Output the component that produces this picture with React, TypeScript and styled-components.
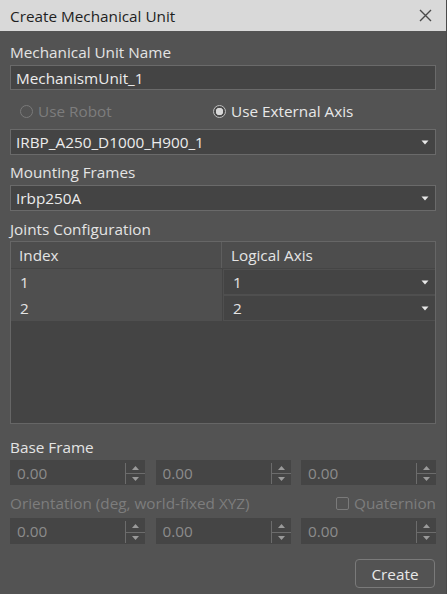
import styled, { createGlobalStyle } from "styled-components";

const GlobalStyle = createGlobalStyle`
  html, body {
    margin: 0;
    padding: 0;
    background: #535353;
  }
  * {
    box-sizing: border-box;
  }
`;

const AXIS_OPTIONS = [
  { index: 1, axis: "1" },
  { index: 2, axis: "2" },
];

export default function App() {
  return (
    <>
      <GlobalStyle />
      <Dialog>
        <TitleBar>
          <Title>Create Mechanical Unit</Title>
          <CloseIcon />
        </TitleBar>
        <Body>
          <Label>Mechanical Unit Name</Label>
          <TextField>MechanismUnit_1</TextField>

          <RadioRow>
            <RadioItem $disabled>
              <Radio $disabled />
              Use Robot
            </RadioItem>
            <RadioItem>
              <Radio $checked />
              Use External Axis
            </RadioItem>
          </RadioRow>

          <Combo $top={8}>
            IRBP_A250_D1000_H900_1
            <ArrowDown />
          </Combo>

          <Label $top={7}>Mounting Frames</Label>
          <Combo>
            Irbp250A
            <ArrowDown />
          </Combo>

          <Label $top={8}>Joints Configuration</Label>
          <Table>
            <HeaderRow>
              <HeaderCell>Index</HeaderCell>
              <HeaderCell $last>Logical Axis</HeaderCell>
            </HeaderRow>
            {AXIS_OPTIONS.map((row) => (
              <TableRow key={row.index}>
                <IndexCell>{row.index}</IndexCell>
                <CellCombo>
                  {row.axis}
                  <ArrowDown />
                </CellCombo>
              </TableRow>
            ))}
          </Table>

          <Label $top={13}>Base Frame</Label>
          <SpinRow>
            {[0, 1, 2].map((i) => (
              <SpinBox key={i} value="0.00" />
            ))}
          </SpinRow>

          <OrientationRow>
            <Label $disabled $top={0}>
              Orientation (deg, world-fixed XYZ)
            </Label>
            <CheckItem>
              <CheckBox />
              Quaternion
            </CheckItem>
          </OrientationRow>
          <SpinRow $tall>
            {[0, 1, 2].map((i) => (
              <SpinBox key={i} value="0.00" />
            ))}
          </SpinRow>

          <Footer>
            <Button>Create</Button>
          </Footer>
        </Body>
      </Dialog>
    </>
  );
}

function CloseIcon() {
  return (
    <svg width="13" height="13" viewBox="0 0 13 13">
      <path
        d="M1 1 L12 12 M12 1 L1 12"
        stroke="#4a4a4a"
        strokeWidth="1.4"
        fill="none"
      />
    </svg>
  );
}

function ArrowDown() {
  return (
    <Arrow width="8" height="5" viewBox="0 0 8 5">
      <path d="M0.5 0.5 H7.5 L4 4.5 Z" fill="#e8e8e8" />
    </Arrow>
  );
}

function SpinBox({ value }: { value: string }) {
  return (
    <Spin>
      <SpinValue>{value}</SpinValue>
      <SpinButtons>
        <SpinHalf>
          <svg width="7" height="4" viewBox="0 0 7 4">
            <path d="M0 4 H7 L3.5 0 Z" fill="#9a9a9a" />
          </svg>
        </SpinHalf>
        <SpinHalf $bottom>
          <svg width="7" height="4" viewBox="0 0 7 4">
            <path d="M0 0 H7 L3.5 4 Z" fill="#9a9a9a" />
          </svg>
        </SpinHalf>
      </SpinButtons>
    </Spin>
  );
}

const Dialog = styled.div`
  width: 447px;
  height: 594px;
  display: flex;
  flex-direction: column;
  background: #535353;
  border-right: 1px solid #4a4a4a;
  font-family: "Open Sans", "Noto Sans", sans-serif;
  font-size: 15.3px;
  color: #e4e4e4;
  overflow: hidden;
`;

const TitleBar = styled.div`
  height: 31px;
  flex: none;
  display: flex;
  align-items: center;
  justify-content: space-between;
  padding: 0 14px 0 10px;
  background: #d9d9d9;
`;

const Title = styled.span`
  font-size: 15.3px;
  color: #1f1f1f;
`;

const Body = styled.div`
  display: flex;
  flex-direction: column;
  padding: 11px 10px 0 10px;
`;

const Label = styled.div<{ $top?: number; $disabled?: boolean }>`
  height: 20px;
  line-height: 20px;
  margin-top: ${({ $top }) => $top ?? 0}px;
  margin-bottom: 3px;
  color: ${({ $disabled }) => ($disabled ? "#7d7d7d" : "#e4e4e4")};
  white-space: nowrap;
`;

const TextField = styled.div`
  height: 25px;
  display: flex;
  align-items: center;
  padding: 0 5px;
  background: #444444;
  border: 1px solid #6a6a6a;
  color: #ececec;
`;

const RadioRow = styled.div`
  display: grid;
  grid-template-columns: 193px 1fr;
  height: 20px;
  margin-top: 11px;
  padding-left: 10px;
`;

const RadioItem = styled.label<{ $disabled?: boolean }>`
  display: flex;
  align-items: center;
  gap: 5px;
  line-height: 20px;
  color: ${({ $disabled }) => ($disabled ? "#7d7d7d" : "#e8e8e8")};
`;

const Radio = styled.span<{ $checked?: boolean; $disabled?: boolean }>`
  width: 13px;
  height: 13px;
  border-radius: 50%;
  border: 1px solid ${({ $disabled }) => ($disabled ? "#7a7a7a" : "#bdbdbd")};
  background: ${({ $checked }) =>
    $checked
      ? "radial-gradient(circle, #d8d8d8 0, #d8d8d8 3.5px, #4a4a4a 4px)"
      : "transparent"};
`;

const Combo = styled.div<{ $top?: number }>`
  position: relative;
  height: 26px;
  flex: none;
  display: flex;
  align-items: center;
  margin-top: ${({ $top }) => $top ?? 0}px;
  padding: 0 5px;
  background: #444444;
  border: 1px solid #6a6a6a;
  color: #ececec;
`;

const Arrow = styled.svg`
  position: absolute;
  right: 6px;
  top: 50%;
  margin-top: -2px;
`;

const Table = styled.div`
  height: 183px;
  margin-top: -1px;
  background: #444444;
  border: 1px solid #666666;
  display: flex;
  flex-direction: column;
`;

const HeaderRow = styled.div`
  display: grid;
  grid-template-columns: 211px 1fr;
  height: 27px;
  background: #4d4d4d;
  border-bottom: 1px solid #454545;
`;

const HeaderCell = styled.div<{ $last?: boolean }>`
  display: flex;
  align-items: center;
  padding-left: ${({ $last }) => ($last ? 9 : 8)}px;
  border-right: ${({ $last }) => ($last ? "none" : "1px solid #5e5e5e")};
`;

const TableRow = styled.div`
  display: grid;
  grid-template-columns: 212px 1fr;
  height: 26px;
  background: #4f4f4f;
`;

const IndexCell = styled.div`
  display: flex;
  align-items: center;
  padding-left: 9px;
  border-right: 1px solid #444444;
`;

const CellCombo = styled.div`
  position: relative;
  display: flex;
  align-items: center;
  margin: 1px 0 1px 1px;
  padding-left: 9px;
  background: #444444;
`;

const SpinRow = styled.div<{ $tall?: boolean }>`
  display: grid;
  grid-template-columns: repeat(3, 1fr);
  column-gap: 10.5px;
  height: ${({ $tall }) => ($tall ? 26 : 25)}px;
`;

const Spin = styled.div`
  display: flex;
  background: #454545;
`;

const SpinValue = styled.div`
  flex: 1;
  display: flex;
  align-items: center;
  padding-left: 7px;
  color: #8c8c8c;
`;

const SpinButtons = styled.div`
  width: 20px;
  display: flex;
  flex-direction: column;
  margin: 3px 0 1px 0;
  border-left: 1px solid #6c6c6c;
`;

const SpinHalf = styled.div<{ $bottom?: boolean }>`
  flex: 1;
  display: flex;
  justify-content: center;
  align-items: center;
  border-top: ${({ $bottom }) => ($bottom ? "1px solid #6c6c6c" : "none")};
`;

const OrientationRow = styled.div`
  display: flex;
  align-items: flex-start;
  justify-content: space-between;
  margin-top: 8px;
  margin-bottom: 2px;
`;

const CheckItem = styled.label`
  display: flex;
  align-items: center;
  gap: 5px;
  height: 20px;
  color: #7d7d7d;
`;

const CheckBox = styled.span`
  width: 13px;
  height: 13px;
  border: 1px solid #7a7a7a;
  border-radius: 2px;
`;

const Footer = styled.div`
  display: flex;
  justify-content: flex-end;
  margin-top: 15px;
  padding-right: 1px;
`;

const Button = styled.button`
  width: 80px;
  height: 29px;
  background: #535353;
  border: 1px solid #7a7a7a;
  border-radius: 4px;
  font-family: inherit;
  font-size: 15.3px;
  color: #e8e8e8;
`;
